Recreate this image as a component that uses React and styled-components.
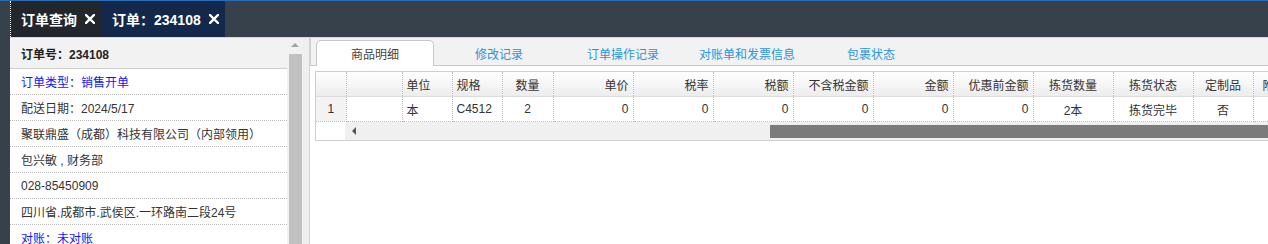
import React from "react";
import styled, { createGlobalStyle } from "styled-components";

const GlobalStyle = createGlobalStyle`
  html, body {
    margin: 0;
    padding: 0;
    height: 100%;
    overflow: hidden;
    background: #37414b;
  }
  body {
    font-family: "Liberation Sans", "Noto Sans CJK SC", sans-serif;
    font-size: 12px;
    color: #333;
  }
  #root {
    height: 100%;
  }
`;

const infoRows = [
  { text: "订单类型：销售开单", link: true },
  { text: "配送日期：2024/5/17" },
  { text: "聚联鼎盛（成都）科技有限公司（内部领用）" },
  { text: "包兴敏 , 财务部" },
  { text: "028-85450909" },
  { text: "四川省.成都市.武侯区.一环路南二段24号" },
  { text: "对账：未对账", link: true },
];

const tabs = ["商品明细", "修改记录", "订单操作记录", "对账单和发票信息", "包裹状态"];

const columns = [
  { title: "", width: 30, align: "center", num: true },
  { title: "", width: 56, align: "left" },
  { title: "单位", width: 50, align: "left" },
  { title: "规格", width: 50, align: "left" },
  { title: "数量", width: 51, align: "center" },
  { title: "单价", width: 80, align: "right" },
  { title: "税率", width: 80, align: "right" },
  { title: "税额", width: 80, align: "right" },
  { title: "不含税金额", width: 80, align: "right" },
  { title: "金额", width: 80, align: "right" },
  { title: "优惠前金额", width: 80, align: "right" },
  { title: "拣货数量", width: 80, align: "center" },
  { title: "拣货状态", width: 80, align: "center" },
  { title: "定制品", width: 60, align: "center" },
  { title: "附件", width: 80, align: "left", inset: 9 },
];

const rows = [
  ["1", "", "本", "C4512", "2", "0", "0", "0", "0", "0", "0", "2本", "拣货完毕", "否", ""],
];

const Page = styled.div`
  display: flex;
  flex-direction: column;
  height: 100%;
`;

const TopBar = styled.div`
  display: flex;
  height: 36px;
  flex: none;
  border-top: 1px solid #2b6db4;
  background: #37414b;
  padding-left: 10px;
`;

const NavTab = styled.div`
  display: flex;
  align-items: center;
  gap: 8px;
  height: 100%;
  box-sizing: border-box;
  padding: 0 ${(p) => (p.$active ? 6 : 4)}px 0 ${(p) => (p.$active ? 11 : 10)}px;
  background: ${(p) => (p.$active ? "#13284a" : "#22272d")};
  border-left: ${(p) => (p.$active ? "none" : "1px dotted #ffffff")};
  color: #fff;
  font-size: 14px;
  font-weight: bold;
  white-space: nowrap;
  width: ${(p) => (p.$active ? 124 : 91)}px;
`;

const CloseIcon = () => (
  <svg width="10" height="10" viewBox="0 0 10 10">
    <path d="M1 1 L9 9 M9 1 L1 9" stroke="#fff" strokeWidth="2.4" strokeLinecap="square" />
  </svg>
);

const Body = styled.div`
  flex: 1;
  display: flex;
  min-height: 0;
`;

const Rail = styled.div`
  width: 10px;
  flex: none;
  background: #37414b;
`;

const InfoPanel = styled.div`
  width: 277px;
  flex: none;
  background: #fff;
  overflow: hidden;
`;

const InfoHead = styled.div`
  height: 30px;
  display: flex;
  align-items: center;
  padding-left: 11px;
  background: #f2f2f2;
  border-top: 1px solid #d8d8d8;
  border-bottom: 1px solid #cfcfcf;
  font-weight: bold;
  color: #222;
`;

const InfoRow = styled.div`
  height: 25px;
  display: flex;
  align-items: center;
  padding-left: 11px;
  border-bottom: 1px dotted #bbb;
  color: ${(p) => (p.$link ? "#1414ff" : "#333")};
  white-space: nowrap;
`;

const VScroll = styled.div`
  width: 16px;
  flex: none;
  display: flex;
  flex-direction: column;
  align-items: center;
  background: #f1f1f1;
  border-top: 1px solid #d8d8d8;
`;

const UpArrow = styled.div`
  margin-top: 5px;
  width: 0;
  height: 0;
  border-left: 4px solid transparent;
  border-right: 4px solid transparent;
  border-bottom: 4px solid #a3a3a3;
`;

const VThumb = styled.div`
  margin-top: 7px;
  align-self: stretch;
  margin-left: 2px;
  margin-right: 1px;
  flex: 1;
  background: #c1c1c1;
`;

const Gutter = styled.div`
  width: 6px;
  flex: none;
  background: #efefef;
  border-top: 1px solid #d8d8d8;
  border-right: 1px solid #d2d2d2;
`;

const Main = styled.div`
  flex: 1;
  min-width: 0;
  background: #fff;
  overflow: hidden;
  border-top: 1px solid #d8d8d8;
`;

const TabStrip = styled.div`
  display: flex;
  gap: 6px;
  height: 27px;
  padding-left: 5px;
  background: #f2f2f2;
  border-left: 1px solid #d0d0d0;
  border-bottom: 1px solid #c8c8c8;
  align-items: flex-end;
`;

const TabItem = styled.div`
  width: 118px;
  height: 26px;
  box-sizing: border-box;
  display: flex;
  align-items: center;
  justify-content: center;
  border-radius: 5px 5px 0 0;
  margin-bottom: -1px;
  border: 1px solid ${(p) => (p.$active ? "#c8c8c8" : "transparent")};
  border-bottom: none;
  background: ${(p) => (p.$active ? "#fff" : "transparent")};
  color: ${(p) => (p.$active ? "#444" : "#2b95dc")};
  flex: none;
  white-space: nowrap;
`;

const GridWrap = styled.div`
  margin: 5px 0 0 5px;
  width: 1017px;
  border: 1px solid #cfcfcf;
`;

const Table = styled.table`
  border-collapse: collapse;
  table-layout: fixed;
  width: 1017px;
`;

const Th = styled.th`
  height: 24px;
  padding: 0 4px 0 ${(p) => p.$inset || 4}px;
  font-weight: normal;
  text-align: ${(p) => p.$align};
  color: #333;
  background: linear-gradient(#ffffff, #ececec);
  border-right: 1px dotted #bdbdbd;
  border-bottom: 1px solid #dcdcdc;
  white-space: nowrap;
  overflow: hidden;
`;

const Td = styled.td`
  height: 24px;
  padding: 0 4px;
  text-align: ${(p) => p.$align};
  color: #333;
  background: ${(p) => (p.$num ? "#f3f3f3" : "#fff")};
  border-right: 1px dotted #bdbdbd;
  border-bottom: 1px dotted #bdbdbd;
  white-space: nowrap;
  overflow: hidden;
`;

const HScroll = styled.div`
  display: flex;
  height: 18px;
`;

const HSpacer = styled.div`
  width: 29px;
  flex: none;
  background: #fff;
`;

const HTrack = styled.div`
  flex: 1;
  display: flex;
  align-items: center;
  background: #f0f0f0;
`;

const LeftArrow = styled.div`
  margin-left: 7px;
  width: 0;
  height: 0;
  border-top: 4px solid transparent;
  border-bottom: 4px solid transparent;
  border-right: 4px solid #555;
`;

const HThumb = styled.div`
  margin-left: 414px;
  flex: 1;
  height: 13px;
  background: #7b7b7b;
`;

export default function App() {
  return (
    <Page>
      <GlobalStyle />
      <TopBar>
        <NavTab>
          订单查询 <CloseIcon />
        </NavTab>
        <NavTab $active>
          订单：234108 <CloseIcon />
        </NavTab>
      </TopBar>
      <Body>
        <Rail />
        <InfoPanel>
          <InfoHead>订单号：234108</InfoHead>
          {infoRows.map((r, i) => (
            <InfoRow key={i} $link={r.link}>
              {r.text}
            </InfoRow>
          ))}
        </InfoPanel>
        <VScroll>
          <UpArrow />
          <VThumb />
        </VScroll>
        <Gutter />
        <Main>
          <TabStrip>
            {tabs.map((t, i) => (
              <TabItem key={t} $active={i === 0}>
                {t}
              </TabItem>
            ))}
          </TabStrip>
          <GridWrap>
            <Table>
              <colgroup>
                {columns.map((c, i) => (
                  <col key={i} style={{ width: c.width }} />
                ))}
              </colgroup>
              <thead>
                <tr>
                  {columns.map((c, i) => (
                    <Th key={i} $align={c.align} $inset={c.inset}>
                      {c.title}
                    </Th>
                  ))}
                </tr>
              </thead>
              <tbody>
                {rows.map((row, ri) => (
                  <tr key={ri}>
                    {row.map((cell, ci) => (
                      <Td key={ci} $align={columns[ci].align} $num={columns[ci].num}>
                        {cell}
                      </Td>
                    ))}
                  </tr>
                ))}
              </tbody>
            </Table>
            <HScroll>
              <HSpacer />
              <HTrack>
                <LeftArrow />
                <HThumb />
              </HTrack>
            </HScroll>
          </GridWrap>
        </Main>
      </Body>
    </Page>
  );
}
